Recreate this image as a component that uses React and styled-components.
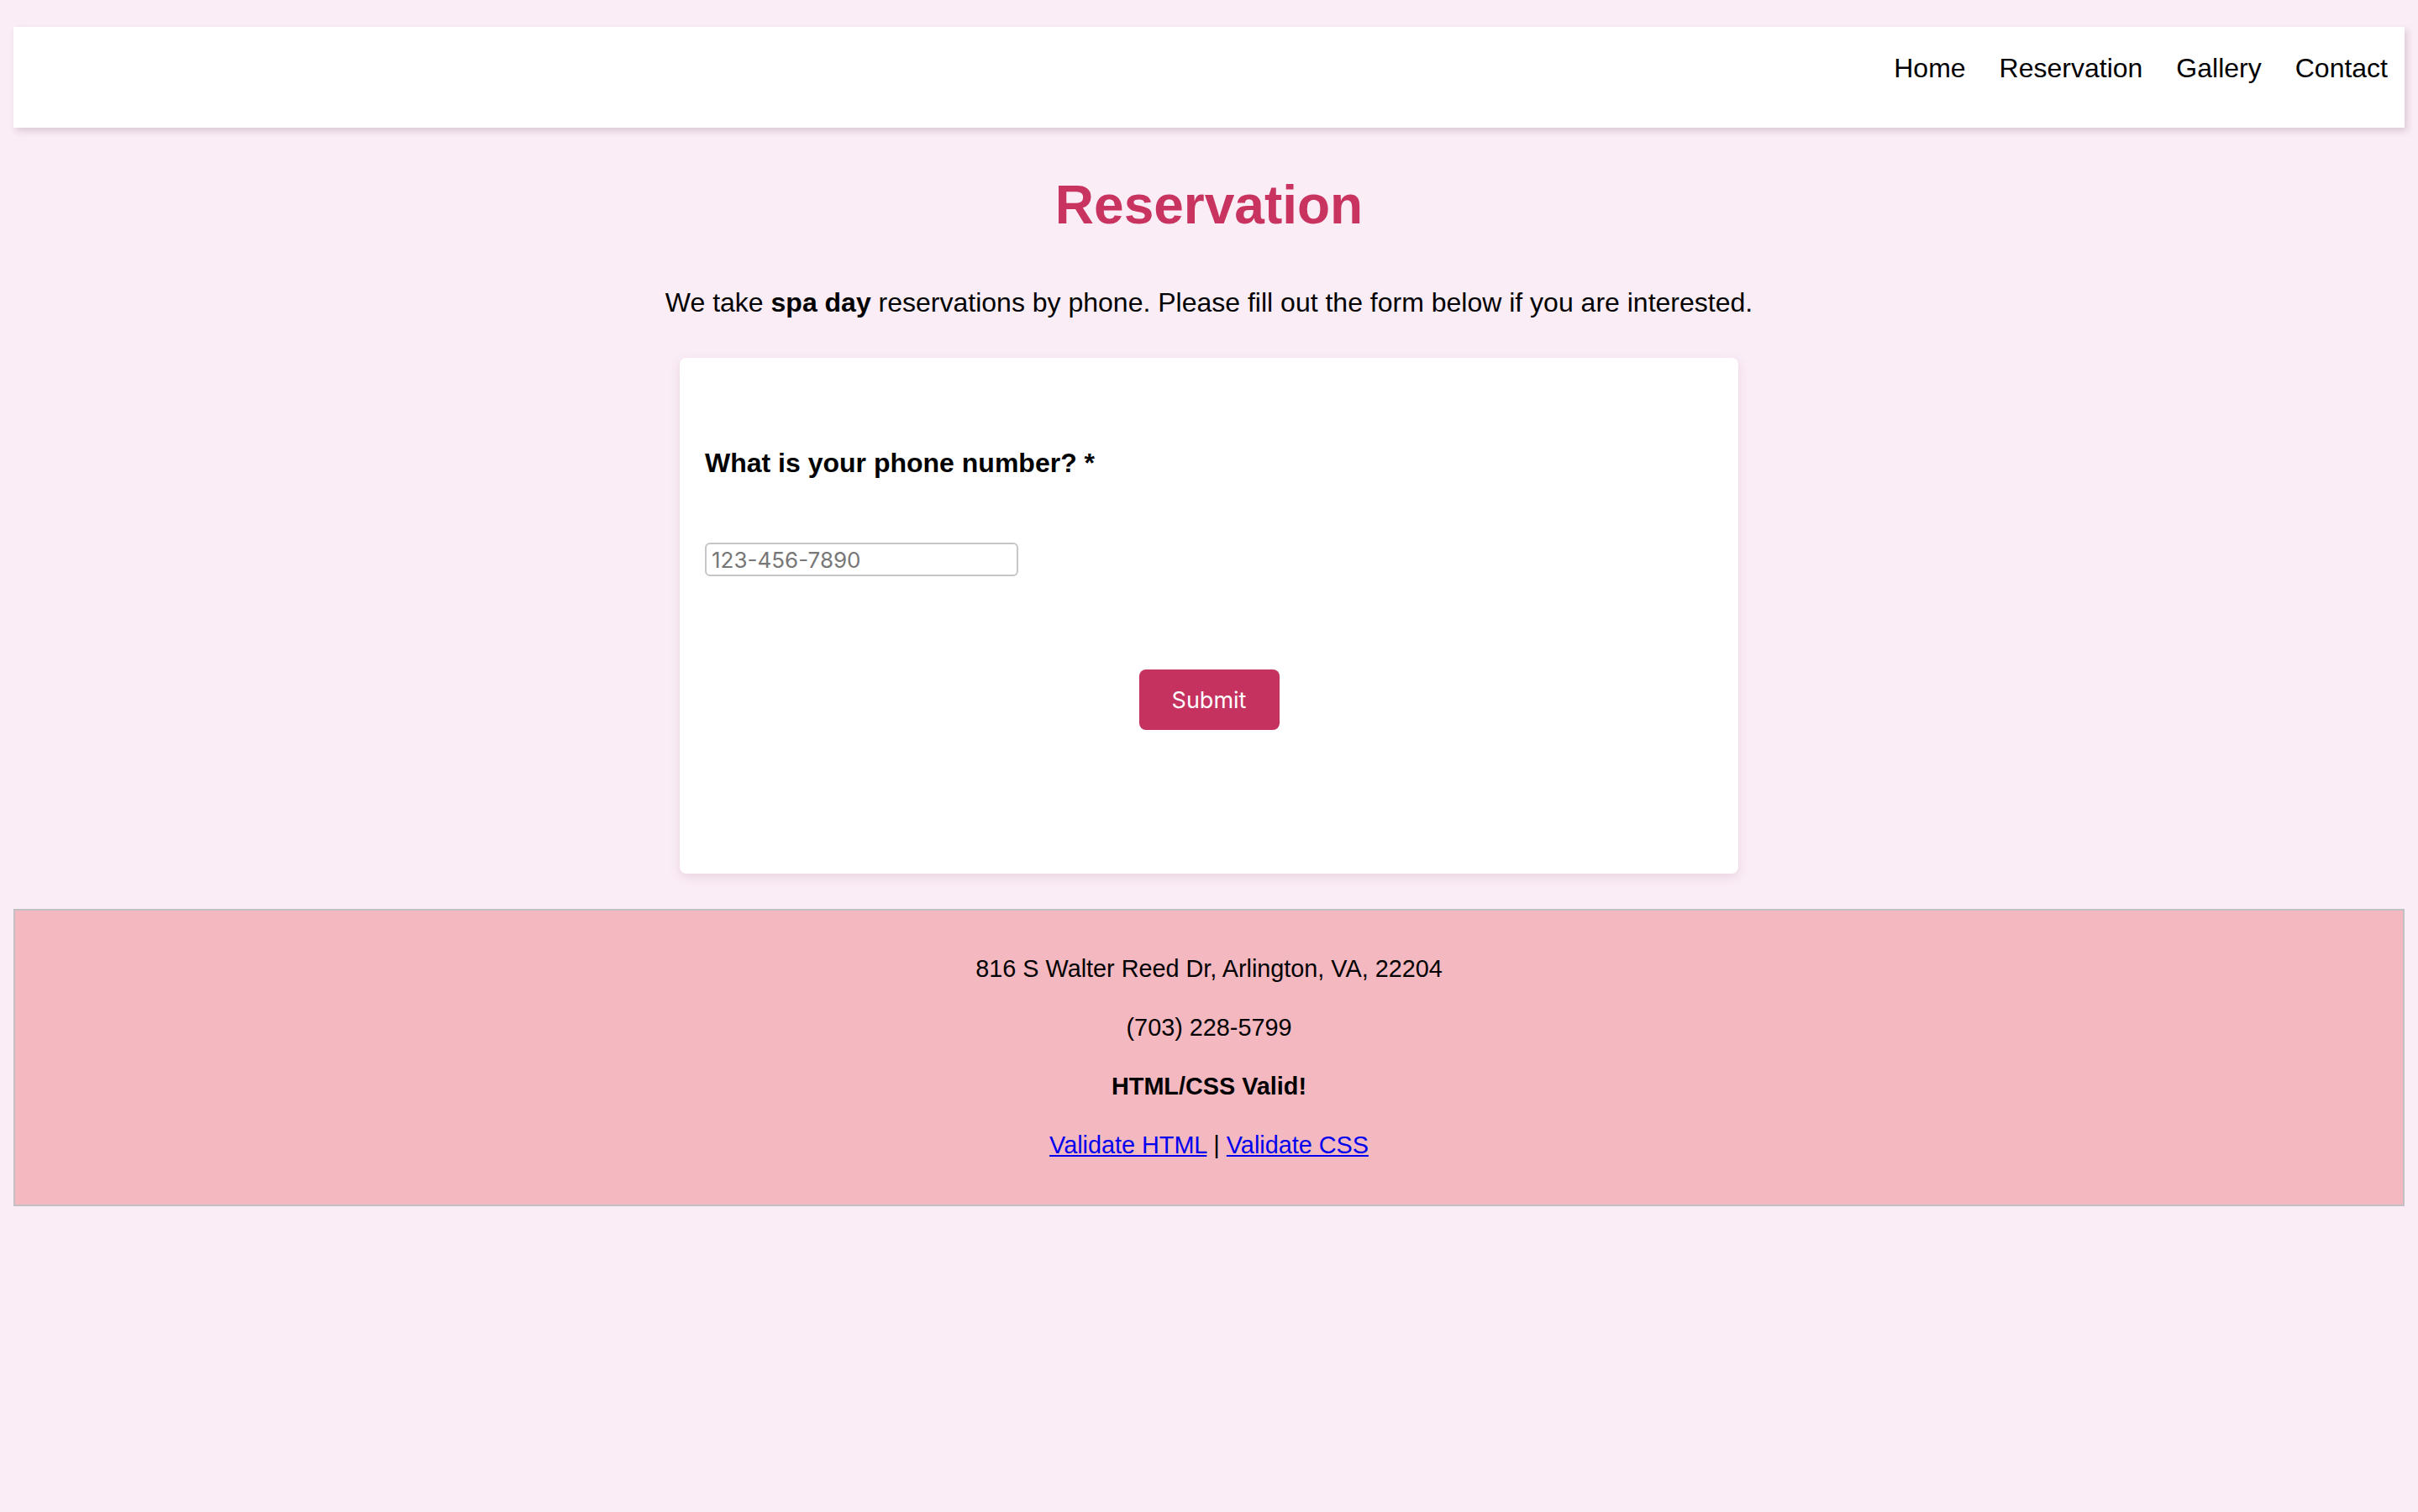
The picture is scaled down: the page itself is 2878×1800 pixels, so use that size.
import React from 'react';
import styled, { createGlobalStyle } from 'styled-components';

const GlobalStyle = createGlobalStyle`
  html, body {
    margin: 0;
    padding: 0;
    background: #faedf6;
    min-height: 100vh;
  }
  body {
    font-family: "Liberation Sans", Arial, sans-serif;
    color: #000;
  }
`;

const Page = styled.div`
  padding: 32px 16px 0;
`;

const Header = styled.header`
  height: 120px;
  box-sizing: border-box;
  background: #fff;
  box-shadow: 3px 4px 8px rgba(80, 40, 70, 0.18);
  display: flex;
  justify-content: flex-end;
  align-items: flex-start;
  padding: 31px 20px 0 0;
`;

const NavList = styled.nav`
  display: flex;
  gap: 40px;
`;

const NavLink = styled.a`
  font-size: 32px;
  line-height: 37px;
  color: #000;
  text-decoration: none;
`;

const Title = styled.h1`
  margin: 55px 0 0;
  font-size: 64px;
  line-height: 74px;
  font-weight: 700;
  text-align: center;
  color: #c8335f;
`;

const Intro = styled.p`
  margin: 61px 0 0;
  font-size: 32px;
  line-height: 37px;
  text-align: center;
`;

const Card = styled.form`
  width: 1260px;
  height: 614px;
  box-sizing: border-box;
  margin: 47px auto 0;
  padding: 107px 30px 0;
  background: #fff;
  border-radius: 8px;
  box-shadow: 0 4px 12px rgba(200, 150, 180, 0.3);
  display: flex;
  flex-direction: column;
  align-items: flex-start;
`;

const Label = styled.label`
  font-size: 32px;
  line-height: 37px;
  font-weight: 700;
`;

const PhoneInput = styled.input`
  margin-top: 76px;
  width: 373px;
  height: 40px;
  box-sizing: border-box;
  padding: 0 6px;
  border: 2px solid #c6c6c6;
  border-radius: 6px;
  background: #fff;
  font-family: Inter, "Liberation Sans", sans-serif;
  font-size: 26px;
  color: #000;
  outline: none;

  &::placeholder {
    color: #777;
  }
`;

const SubmitButton = styled.button`
  margin: 111px auto 0;
  width: 167px;
  height: 72px;
  border: none;
  border-radius: 8px;
  background: #c5325f;
  color: #fff;
  font-family: Inter, "Liberation Sans", sans-serif;
  font-size: 27px;
  cursor: pointer;
`;

const Footer = styled.footer`
  margin-top: 42px;
  border: 2px solid #c2c0c2;
  background: #f4b8c1;
  padding: 53px 0 54px;
  display: flex;
  flex-direction: column;
  align-items: center;
  gap: 37px;
`;

const FooterLine = styled.p`
  margin: 0;
  font-size: 28.8px;
  line-height: 33px;
  font-weight: ${props => (props.bold ? 700 : 400)};
  text-align: center;
`;

const FooterLink = styled.a`
  color: #0000ee;
  text-decoration: underline;
`;

const App = () => {
  const links = ['Home', 'Reservation', 'Gallery', 'Contact'];

  return (
    <Page>
      <GlobalStyle />
      <Header>
        <NavList>
          {links.map(l => (
            <NavLink key={l} href="#">{l}</NavLink>
          ))}
        </NavList>
      </Header>

      <Title>Reservation</Title>
      <Intro>
        We take <strong>spa day</strong> reservations by phone. Please fill out the form below if you are interested.
      </Intro>

      <Card onSubmit={e => e.preventDefault()}>
        <Label htmlFor="phone">What is your phone number? *</Label>
        <PhoneInput id="phone" type="tel" placeholder="123-456-7890" />
        <SubmitButton type="submit">Submit</SubmitButton>
      </Card>

      <Footer>
        <FooterLine>816 S Walter Reed Dr, Arlington, VA, 22204</FooterLine>
        <FooterLine>(703) 228-5799</FooterLine>
        <FooterLine bold>HTML/CSS Valid!</FooterLine>
        <FooterLine>
          <FooterLink href="#">Validate HTML</FooterLink> | <FooterLink href="#">Validate CSS</FooterLink>
        </FooterLine>
      </Footer>
    </Page>
  );
};

export default App;
